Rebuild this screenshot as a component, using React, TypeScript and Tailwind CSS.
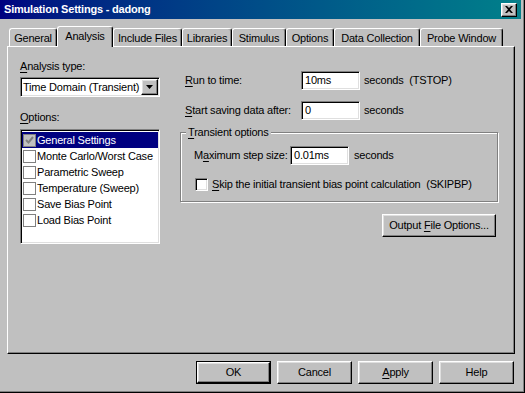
import React from 'react';

const raised =
  'bg-[#c0c0c0] border border-t-white border-l-white border-r-black border-b-black shadow-[inset_-1px_-1px_0_#808080,inset_1px_1px_0_#dfdfdf]';
const sunken =
  'bg-white border border-t-[#808080] border-l-[#808080] border-r-white border-b-white shadow-[inset_1px_1px_0_#000,inset_-1px_-1px_0_#dfdfdf]';

function U({ c }: { c: string }) {
  return <span className="underline underline-offset-[2px]">{c}</span>;
}

function Tab({ label, w, active }: { label: string; w: string; active?: boolean }) {
  if (active) {
    return (
      <div
        className={`${w} h-[21px] -mb-[1px] relative z-10 bg-[#c0c0c0] border-l border-t border-white rounded-tl-[3px] rounded-tr-[3px] border-r border-r-black shadow-[inset_-1px_0_0_#808080] flex justify-center pt-[3px]`}
      >
        {label}
      </div>
    );
  }
  return (
    <div
      className={`${w} h-[18px] bg-[#c0c0c0] border-l border-t border-white rounded-tl-[3px] rounded-tr-[3px] border-r border-r-black shadow-[inset_-1px_0_0_#808080] flex justify-center pt-[3px]`}
    >
      {label}
    </div>
  );
}

function ListRow({ label, selected }: { label: string; selected?: boolean }) {
  return (
    <div className={`h-[16px] flex items-center ${selected ? 'bg-[#000080] text-white' : ''}`}>
      <div
        className={`ml-[1px] w-[13px] h-[13px] border border-[#808080] flex items-center justify-center ${
          selected ? 'bg-[#c0c0c0]' : 'bg-white'
        }`}
      >
        {selected && (
          <svg width="9" height="8" viewBox="0 0 9 8">
            <polyline points="1,4 3.5,6.5 8,1" fill="none" stroke="#808080" strokeWidth="2" />
          </svg>
        )}
      </div>
      <span className="ml-[1px]">{label}</span>
    </div>
  );
}

function Btn({ children, def, w = 'w-[75px]' }: { children: React.ReactNode; def?: boolean; w?: string }) {
  if (def) {
    return (
      <div className={`${w} h-[23px] border border-black`}>
        <div className={`${raised} w-full h-full flex items-center justify-center`}>
          <span>{children}</span>
        </div>
      </div>
    );
  }
  return (
    <div className={`${raised} ${w} h-[23px] flex items-center justify-center`}>
      <span>{children}</span>
    </div>
  );
}

export default function App() {
  return (
    <div className="w-[525px] h-[393px] bg-[#c0c0c0] border-r border-b border-black shadow-[inset_-1px_-1px_0_#808080] font-['Liberation_Sans',Arial,sans-serif] text-[11px] leading-[13px] tracking-[-0.2px] whitespace-nowrap text-black overflow-hidden">
      {/* title bar */}
      <div className="h-[19px] mr-[3px] flex items-center justify-between pl-[4px] pr-[4px] bg-gradient-to-r from-[#000080] to-[#08808a]">
        <span className="text-white font-bold text-[11px]">Simulation Settings - dadong</span>
        <div className={`${raised} w-[16px] h-[14px] flex items-center justify-center`}>
          <svg width="8" height="7" viewBox="0 0 8 7">
            <path d="M0 0h2l2 2 2-2h2L5 3.5 8 7H6L4 5 2 7H0l3-3.5z" fill="#000" />
          </svg>
        </div>
      </div>

      {/* tabs */}
      <div className="mt-[7px] pl-[9px] flex items-end h-[20px]">
        <Tab label="General" w="w-[48px]" />
        <Tab label="Analysis" w="w-[56px]" active />
        <Tab label="Include Files" w="w-[69px]" />
        <Tab label="Libraries" w="w-[50px]" />
        <Tab label="Stimulus" w="w-[54px]" />
        <Tab label="Options" w="w-[48px]" />
        <Tab label="Data Collection" w="w-[86px]" />
        <Tab label="Probe Window" w="w-[83px]" />
      </div>

      {/* panel */}
      <div className="ml-[7px] w-[508px] h-[308px] border-l border-t border-white border-r border-b border-r-black border-b-black shadow-[inset_-1px_-1px_0_#808080] pt-[13px] pl-[12px] flex">
        {/* left column */}
        <div className="w-[140px] flex flex-col">
          <div className="h-[13px]">
            <U c="A" />nalysis type:
          </div>
          <div className={`${sunken} mt-[4px] h-[20px] flex items-center justify-between pl-[2px] pr-[1px]`}>
            <span>Time Domain (Transient)</span>
            <div className={`${raised} w-[17px] h-[16px] flex items-center justify-center`}>
              <svg width="7" height="4" viewBox="0 0 7 4">
                <path d="M0 0h7L3.5 4z" fill="#000" />
              </svg>
            </div>
          </div>
          <div className="mt-[14px] h-[13px]">
            <U c="O" />ptions:
          </div>
          <div className={`${sunken} mt-[5px] h-[115px] p-[1px] pt-[2px]`}>
            <ListRow label="General Settings" selected />
            <ListRow label="Monte Carlo/Worst Case" />
            <ListRow label="Parametric Sweep" />
            <ListRow label="Temperature (Sweep)" />
            <ListRow label="Save Bias Point" />
            <ListRow label="Load Bias Point" />
          </div>
        </div>

        {/* right column */}
        <div className="ml-[20px] w-[318px] flex flex-col">
          <div className="mt-[11px] h-[19px] flex items-center pl-[5px]">
            <span className="w-[116px]">
              <U c="R" />un to time:
            </span>
            <div className={`${sunken} w-[59px] h-[19px] flex items-center pl-[3px]`}>10ms</div>
            <span className="ml-[4px]">seconds&nbsp; (TSTOP)</span>
          </div>
          <div className="mt-[11px] h-[19px] flex items-center pl-[5px]">
            <span className="w-[116px]">
              <U c="S" />tart saving data after:
            </span>
            <div className={`${sunken} w-[59px] h-[19px] flex items-center pl-[3px]`}>0</div>
            <span className="ml-[4px]">seconds</span>
          </div>

          {/* group box */}
          <div className="relative mt-[12px] h-[70px] border border-[#808080] shadow-[inset_1px_1px_0_#fff,1px_1px_0_#fff] flex flex-col">
            <span className="absolute -top-[7px] left-[5px] px-[2px] bg-[#c0c0c0]">
              <U c="T" />ransient options
            </span>
            <div className="mt-[13px] h-[19px] flex items-center pl-[13px]">
              <span className="w-[96px]">
                M<U c="a" />ximum step size:
              </span>
              <div className={`${sunken} w-[59px] h-[19px] flex items-center pl-[3px]`}>0.01ms</div>
              <span className="ml-[5px]">seconds</span>
            </div>
            <div className="mt-[13px] h-[13px] flex items-center pl-[14px]">
              <div className={`${sunken} w-[13px] h-[13px]`} />
              <span className="ml-[4px]">
                <U c="S" />kip the initial transient bias point calculation&nbsp; (SKIPBP)
              </span>
            </div>
          </div>

          <div className="mt-[12px] flex justify-end pr-[2px]">
            <Btn w="w-[114px]">
              Output <U c="F" />ile Options...
            </Btn>
          </div>
        </div>
      </div>

      {/* bottom buttons */}
      <div className="mt-[7px] flex justify-end gap-[6px] pr-[10px]">
        <Btn def>OK</Btn>
        <Btn>Cancel</Btn>
        <Btn>
          <U c="A" />pply
        </Btn>
        <Btn>Help</Btn>
      </div>
    </div>
  );
}
